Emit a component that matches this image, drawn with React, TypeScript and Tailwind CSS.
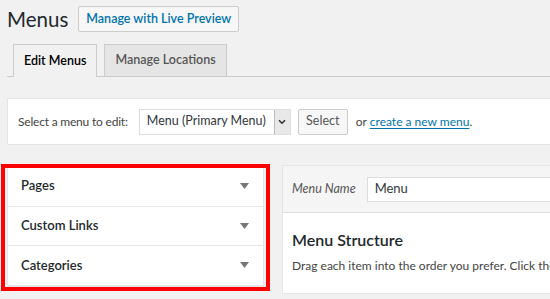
import React from "react";

const Caret = () => (
  <svg width="9" height="6" viewBox="0 0 9 6" className="shrink-0">
    <path d="M0 0 L9 0 L4.5 6 Z" fill="#72777c" />
  </svg>
);

const Chevron = () => (
  <svg width="8" height="6" viewBox="0 0 8 6">
    <path d="M1 1.2 L4 4.2 L7 1.2" stroke="#333" strokeWidth="1.6" fill="none" />
  </svg>
);

const boxes = ["Pages", "Custom Links", "Categories"];

export default function App() {
  return (
    <div className="w-[550px] h-[299px] overflow-hidden bg-[#f1f1f1] font-['Lato',sans-serif] text-[#23282d]">
      {/* title */}
      <div className="flex items-center gap-[10px] pl-[7px] pt-[6px]">
        <h1 className="text-[20.5px] leading-[26px] text-[#23282d]">Menus</h1>
        <button className="h-[26px] px-[7px] border border-[#ccc] bg-[#f7f7f7] rounded-[2px] text-[12.5px] font-semibold text-[#0073aa]">
          Manage with Live Preview
        </button>
      </div>

      {/* tabs */}
      <div className="ml-[7px] mt-[12px] flex gap-[7px] pl-[6px] border-b border-[#ccc]">
        <div className="h-[33px] -mb-px px-[10px] flex items-center border border-b-0 border-[#ccc] bg-[#f1f1f1] text-[12.5px] font-semibold text-black">
          Edit Menus
        </div>
        <div className="h-[32px] px-[10px] flex items-center border border-b-0 border-[#ccc] bg-[#e5e5e5] text-[12.5px] font-semibold text-[#555]">
          Manage Locations
        </div>
      </div>

      {/* select menu */}
      <div className="ml-[7px] mt-[21px] h-[47px] flex items-center pl-[10px] bg-white border border-r-0 border-[#e5e5e5] text-[12px] text-[#444] whitespace-nowrap">
        <span className="tracking-[-0.2px]">Select a menu to edit:</span>
        <div className="ml-[11px] h-[26px] w-[152px] flex border border-[#ddd] bg-white">
          <span className="flex-1 pl-[7px] flex items-center text-[12.5px] text-[#32373c]">Menu (Primary Menu)</span>
          <span className="w-[16px] flex items-center justify-center bg-[#e8e8e8] border-l border-[#bbb]">
            <Chevron />
          </span>
        </div>
        <button className="ml-[7px] h-[26px] w-[50px] border border-[#ccc] bg-[#f7f7f7] rounded-[2px] text-[12.5px] text-[#555]">
          Select
        </button>
        <span className="ml-[8px]">
          or{" "}
          <a className="text-[#0073aa] underline underline-offset-2">create a new menu</a>.
        </span>
      </div>

      {/* columns */}
      <div className="mt-[20px] ml-[7px] flex gap-[18px] items-start">
        <div className="relative w-[257px] shrink-0">
          <div className="bg-white border border-[#e5e5e5] shadow-[0_1px_1px_rgba(0,0,0,0.04)]">
            {boxes.map((b, i) => (
              <div
                key={b}
                className={`h-[39.5px] flex items-center justify-between pl-[13px] pr-[14px] text-[13px] font-semibold text-[#23282d] ${
                  i > 0 ? "border-t border-[#e5e5e5]" : ""
                }`}
              >
                <span>{b}</span>
                <Caret />
              </div>
            ))}
          </div>
          <div className="absolute -left-[6px] -top-px w-[269px] h-[127px] border-[4px] border-[#ff0000] pointer-events-none" />
        </div>

        <div className="flex-1 min-w-[300px] overflow-hidden bg-white border border-r-0 border-[#e5e5e5]">
          <div className="h-[47px] flex items-center pl-[9px] bg-[#f5f5f5] border-b border-[#ddd]">
            <span className="italic text-[12.5px] text-[#555]">Menu Name</span>
            <div className="ml-[11px] flex-1 h-[25px] flex items-center pl-[7px] bg-white border border-[#ddd] text-[13px] text-[#32373c]">
              Menu
            </div>
          </div>
          <div className="pl-[9px] pt-[16px] h-[80px]">
            <h3 className="text-[16px] font-semibold leading-[22px] text-[#23282d]">Menu Structure</h3>
            <p className="mt-[6px] whitespace-nowrap text-[12px] text-[#444]">
              Drag each item into the order you prefer. Click the arrow on the right of the item to reveal additional configuration options.
            </p>
          </div>
        </div>
      </div>
    </div>
  );
}
